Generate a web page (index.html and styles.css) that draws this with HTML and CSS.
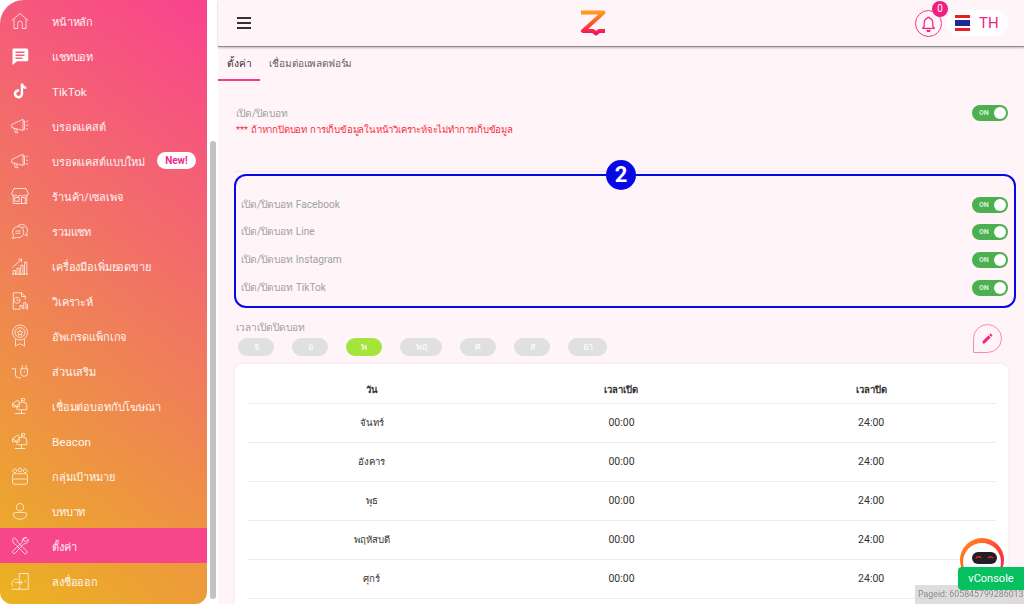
FILE: index.html
```html
<!DOCTYPE html>
<html lang="th">
<head>
<meta charset="utf-8">
<title>ตั้งค่า</title>
<link rel="stylesheet" href="styles.css">
</head>
<body>
<aside class="rail">
  <nav class="side">
    <a class="item"><svg class="ico" viewBox="0 0 24 24"><path d="M1 11.500 12 2l11 9.500M4 9.500V22h5v-7a3 3 0 0 1 6 0v7h5V9.500"/></svg><span>หน้าหลัก</span></a>
    <a class="item"><svg class="ico solid" viewBox="0 0 24 24"><path d="M3 2h18a2 2 0 0 1 2 2v13a2 2 0 0 1-2 2H8l-6 5V4a2 2 0 0 1 1-2zm3 4v2h12V6zm0 4v2h12v-2zm0 4v2h9v-2z" fill-rule="evenodd"/></svg><span>แชทบอท</span></a>
    <a class="item"><svg class="ico solid" viewBox="0 0 24 24"><path d="M13 2h3.200c.3 2.400 1.700 3.900 4.100 4.100v3.300c-1.500 0-2.900-.5-4.100-1.300v7.400c0 4-3 6.500-6.300 6.500-3.500 0-6.200-2.800-6.200-6.200 0-3.700 3.200-6.600 7.100-6.100v3.400c-2-.5-3.700.9-3.700 2.700 0 1.500 1.300 2.800 2.800 2.800 1.700 0 3.100-1.200 3.100-3.200z"/></svg><span class="en">TikTok</span></a>
    <a class="item"><svg class="ico" viewBox="0 0 24 24"><path d="M1 10 16 3v15L1 14zM4 15l2 6h3l-2-5M16 6l2-1v12l-2-1M20 7l3-2M20 11h3M20 15l3 2"/></svg><span>บรอดแคสต์</span></a>
    <a class="item"><svg class="ico" viewBox="0 0 24 24"><path d="M1 10 16 3v15L1 14zM4 15l2 6h3l-2-5M16 6l2-1v12l-2-1M20 7l3-2M20 11h3M20 15l3 2"/></svg><span>บรอดแคสต์แบบใหม่</span><b class="new">New!</b></a>
    <a class="item"><svg class="ico" viewBox="0 0 24 24"><path d="M3 10v12h18V10M1 8l3-6h16l3 6v1a3 3 0 0 1-5.500 1.500 3 3 0 0 1-5.500 0 3 3 0 0 1-5.500 0A3 3 0 0 1 1 9zM5 14h6v5H5zM14 22v-8h5v8"/></svg><span>ร้านค้า/เซลเพจ</span></a>
    <a class="item"><svg class="ico" viewBox="0 0 24 24"><path d="M9 5a8 8 0 0 1 13 6c0 2-.5 3-1.500 4l1.500 3-4-1M9 6a7.500 7.500 0 0 0-7 7.500c0 1.700.6 3 1.500 4.200L2 22l5-1.500a8 8 0 0 0 2.500.5 7.500 7.500 0 0 0 0-15zM6 12h7M6 15h7M15 7h3"/></svg><span>รวมแชท</span></a>
    <a class="item"><svg class="ico" viewBox="0 0 24 24"><path d="M1 23h22M3 23v-5h3v5M8 23v-8h3v8M13 23V11h3v12M18 23V7h3v16M2 14 14 3M10 3h4v4"/></svg><span>เครื่องมือเพิ่มยอดขาย</span></a>
    <a class="item"><svg class="ico" viewBox="0 0 24 24"><path d="M12 23H3V1h11l5 5v4M14 1v5h5M8 7a4 4 0 1 0 .01 0M8 9v2h2M12 23v-5h3v5M17 23v-9h3v9M22 23v-7"/></svg><span>วิเคราะห์</span></a>
    <a class="item"><svg class="ico tall" viewBox="0 0 24 30"><path d="M12 1a10 10 0 1 0 .01 0M12 4.500a6.500 6.500 0 1 0 .01 0M12 7.500l1.200 2.400 2.600.4-1.900 1.800.5 2.600-2.400-1.200-2.400 1.200.5-2.600-1.900-1.800 2.600-.4zM6 20v9l6-3 6 3v-9"/></svg><span>อัพเกรดแพ็กเกจ</span></a>
    <a class="item"><svg class="ico" viewBox="0 0 24 24"><path d="M1 9h5v8a4 4 0 0 0 4 4h3M13 9h9v6a4 4 0 0 1-4 4h-1a4 4 0 0 1-4-4zM15 9V4M20 9V4M17 13h2"/></svg><span>ส่วนเสริม</span></a>
    <a class="item"><svg class="ico" viewBox="0 0 24 24"><path d="M2 9l7-5 2 3v6H2zM2 9l5 3 4-3M14 2v4M14 2h4v3h-4M11 7h6a4 4 0 0 1 4 4v6H9M14 17v5M5 22h14M8 13v4"/></svg><span>เชื่อมต่อบอทกับโฆษณา</span></a>
    <a class="item"><svg class="ico" viewBox="0 0 24 24"><path d="M2 9l7-5 2 3v6H2zM2 9l5 3 4-3M14 2v4M14 2h4v3h-4M11 7h6a4 4 0 0 1 4 4v6H9M14 17v5M5 22h14M8 13v4"/></svg><span class="en">Beacon</span></a>
    <a class="item"><svg class="ico" viewBox="0 0 24 24"><path d="M5 2.500a2.500 2.500 0 1 0 .01 0M12 1.500a2.500 2.500 0 1 0 .01 0M19 2.500a2.500 2.500 0 1 0 .01 0M2 12c0-2 1-3 3-3h14c2 0 3 1 3 3v2c0 1-1 2-2 2H4c-1 0-2-1-2-2zM2 16v4c0 2 1 3 3 3h14c2 0 3-1 3-3v-4"/></svg><span>กลุ่มเป้าหมาย</span></a>
    <a class="item"><svg class="ico" viewBox="0 0 24 24"><path d="M12 2a5 5 0 1 0 .01 0M5 14h14c1 0 2 1 2 2 0 4-4 7-9 7s-9-3-9-7c0-1 1-2 2-2z"/></svg><span>บทบาท</span></a>
    <a class="item active"><svg class="ico" viewBox="0 0 24 24"><path d="M2 3 4 1l4 3 1 3 13 13-3 3L6 10 3 8zM21 1a5 5 0 0 0-6 6L2 19a2.500 2.500 0 0 0 3 3L17 9a5 5 0 0 0 6-6l-3 3-3-1-1-3z"/></svg><span>ตั้งค่า</span></a>
    <a class="item"><svg class="ico" viewBox="0 0 24 24"><path d="M11 17V2h12v21H1M11 23v-4M3 19a4 4 0 0 1 0-7c1-3 5-3 6-1M5 14h10M12 11l3 3-3 3M19 11v3"/></svg><span>ลงชื่อออก</span></a>
  </nav>
  <div class="track"><div class="thumb"></div></div>
</aside>

<main class="main">
  <header class="top">
    <div class="burger"><i></i><i></i><i></i></div>
    <svg class="logo" viewBox="0 0 26 26">
      <defs><linearGradient id="z" x1="0" y1="0" x2="0" y2="1"><stop offset="0" stop-color="#ff9a1e"/><stop offset=".55" stop-color="#ff4a2e"/><stop offset="1" stop-color="#f5145e"/></linearGradient></defs>
      <path d="M1 2.500h22.500L3 21h10l3 2.500 3-2.500h6" fill="none" stroke="url(#z)" stroke-width="4" stroke-linejoin="round"/>
    </svg>
    <div class="tools">
      <div class="bell">
        <svg viewBox="0 0 24 24"><path d="M12 3a1.500 1.500 0 0 1 1.500 1.500c3 1 4.500 3.500 4.500 6.500v5l2 2v1H4v-1l2-2v-5c0-3 1.500-5.500 4.500-6.500A1.500 1.500 0 0 1 12 3zM10 21.500h4a2 2 0 0 1-4 0z"/></svg>
        <b class="count">0</b>
      </div>
      <div class="lang"><span class="flag"></span><span class="code">TH</span></div>
    </div>
  </header>

  <div class="tabs">
    <a class="tab on">ตั้งค่า</a>
    <a class="tab">เชื่อมต่อแพลตฟอร์ม</a>
  </div>

  <div class="body">
    <div class="master">
      <div class="intro">
        <div class="lbl">เปิด/ปิดบอท</div>
        <div class="warn">*** ถ้าหากปิดบอท การเก็บข้อมูลในหน้าวิเคราะห์จะไม่ทำการเก็บข้อมูล</div>
      </div>
      <div class="sw"><em>ON</em><i></i></div>
    </div>
    <hr class="rule">
    <section class="box">
      <b class="mark">2</b>
      <div class="row"><span class="lbl">เปิด/ปิดบอท Facebook</span><div class="sw"><em>ON</em><i></i></div></div>
      <div class="row"><span class="lbl">เปิด/ปิดบอท Line</span><div class="sw"><em>ON</em><i></i></div></div>
      <div class="row"><span class="lbl">เปิด/ปิดบอท Instagram</span><div class="sw"><em>ON</em><i></i></div></div>
      <div class="row"><span class="lbl">เปิด/ปิดบอท TikTok</span><div class="sw"><em>ON</em><i></i></div></div>
    </section>
    <div class="sched">
      <div>
        <div class="lbl">เวลาเปิดปิดบอท</div>
        <div class="days">
          <span class="day w1">จ</span><span class="day w1">อ</span><span class="day w1 lime">พ</span><span class="day w2">พฤ</span><span class="day w1">ศ</span><span class="day w1">ส</span><span class="day w3">อา</span>
        </div>
      </div>
      <button class="edit"><svg viewBox="0 0 24 24"><path d="M3 17.250V21h3.750L17.810 9.940l-3.750-3.750zM20.710 7.040a1 1 0 0 0 0-1.410l-2.340-2.340a1 1 0 0 0-1.410 0l-1.830 1.830 3.750 3.750z"/></svg></button>
    </div>
    <div class="card">
      <table class="tbl">
        <thead><tr><th>วัน</th><th>เวลาเปิด</th><th>เวลาปิด</th></tr></thead>
        <tbody>
          <tr><td>จันทร์</td><td>00:00</td><td>24:00</td></tr>
          <tr><td>อังคาร</td><td>00:00</td><td>24:00</td></tr>
          <tr><td>พุธ</td><td>00:00</td><td>24:00</td></tr>
          <tr><td>พฤหัสบดี</td><td>00:00</td><td>24:00</td></tr>
          <tr><td>ศุกร์</td><td>00:00</td><td>24:00</td></tr>
        </tbody>
      </table>
    </div>
  </div>
</main>

<div class="bot">
  <svg viewBox="0 0 44 44">
    <defs><linearGradient id="r" x1="0" y1="0" x2="1" y2="1"><stop offset="0" stop-color="#ff9a1e"/><stop offset=".5" stop-color="#ff4a2e"/><stop offset="1" stop-color="#f0146e"/></linearGradient></defs>
    <circle cx="22" cy="22" r="22" fill="url(#r)"/>
    <circle cx="22" cy="24" r="19" fill="#fff"/>
    <rect x="12" y="14" width="25" height="12" rx="6" fill="#231f24"/>
    <path d="M16 20q2.500-2.500 5 0M28 20q2.500-2.500 5 0" stroke="#e8243c" stroke-width="1.500" fill="none"/>
  </svg>
</div>
<div class="pageid">Pageid: 605845799286013</div>
<div class="vcon">vConsole</div>
</body>
</html>
```
FILE: styles.css
```css
* { box-sizing: border-box; }
html, body { height: 100%; }
body {
  margin: 0;
  height: 604px;
  overflow: hidden;
  display: flex;
  background: #fff;
  font-family: Roboto, "Noto Sans", "Liberation Sans", sans-serif;
  color: #333;
}
.rail { width: 218px; flex: none; display: flex; background: #fff; }
.side {
  width: 207px;
  height: 604px;
  padding-top: 3px;
  border-radius: 24px 0 12px 12px;
  background: linear-gradient(217deg, #f9428f 0%, #f07c5c 50%, #ebb320 100%);
  overflow: hidden;
}
.item {
  display: flex;
  align-items: center;
  height: 35px;
  padding-left: 11px;
  color: #fff;
  font-size: 11px;
  letter-spacing: -.15px;
  white-space: nowrap;
}
.item span { margin-left: 23px; padding-top: 2px; opacity: .92; }
.item .en { font-size: 11.700px; letter-spacing: 0; }
.item.active { background: #f7468a; }
.ico {
  width: 18px;
  height: 18px;
  flex: none;
  fill: none;
  stroke: rgba(255,255,255,.8);
  stroke-width: 1.200;
}
.ico.tall { height: 23px; }
.ico.solid { fill: #fff; stroke: none; }
.new {
  margin-left: 12px;
  width: 39px;
  height: 17px;
  line-height: 17px;
  border-radius: 9px;
  background: #fff;
  color: #ee2a8e;
  font-size: 10px;
  letter-spacing: 0;
  text-align: center;
}
.track { width: 11px; padding: 141px 2px 4px 3px; }
.thumb { width: 6px; height: 458px; border-radius: 3px; background: #c2c2c2; }

.main { flex: 1; min-width: 0; background: #fff5f9; display: flex; flex-direction: column; }
.top {
  height: 47px;
  flex: none;
  display: flex;
  align-items: center;
  padding: 0 16px 0 19px;
  border-bottom: 1px solid #8f8b8d;
  box-shadow: 0 1px 2px rgba(0,0,0,.25);
  position: relative;
}
.burger { width: 14px; display: flex; flex-direction: column; gap: 3px; }
.burger i { height: 2px; background: #333; }
.logo { width: 26px; height: 26px; margin-left: 329px; }
.tools { margin-left: auto; display: flex; align-items: center; gap: 4px; }
.bell {
  position: relative;
  width: 27px;
  height: 27px;
  border: 1px solid #f0378c;
  border-radius: 50%;
  display: flex;
  align-items: center;
  justify-content: center;
}
.bell svg { width: 17px; height: 17px; fill: none; stroke: #ee2484; stroke-width: 1.700; }
.count {
  position: absolute;
  right: -7px;
  top: -10px;
  width: 16px;
  height: 16px;
  border-radius: 50%;
  background: #ee1f7d;
  color: #fff;
  font-size: 10px;
  font-weight: 400;
  line-height: 16px;
  text-align: center;
}
.lang {
  width: 62px;
  height: 26px;
  border-radius: 13px;
  background: #fff;
  display: flex;
  align-items: center;
  padding-left: 9px;
}
.flag {
  width: 15px;
  height: 16px;
  background: linear-gradient(#ed1c24 0 17%, #fff 17% 33%, #1d2a8f 33% 67%, #fff 67% 83%, #ed1c24 83%);
}
.code { margin-left: 9px; color: #ee2484; font-size: 15px; }

.tabs { display: flex; height: 34px; flex: none; }
.tab { padding: 0 9px; line-height: 34px; font-size: 10px; letter-spacing: -.15px; color: #666; height: 34px; }
.tab.on { color: #333; border-bottom: 2px solid #f7378c; font-size: 10.200px; }

.body { padding: 0 16px 0 17px; position: relative; }
.lbl { font-size: 10.200px; line-height: 16px; color: #a0a0a0; }
.master {
  display: flex;
  justify-content: space-between;
  align-items: flex-start;
  padding: 24px 0 0 1px;
  height: 90px;
}
.intro { padding-top: 1px; }
.warn { font-size: 9.600px; line-height: 16px; letter-spacing: -.2px; word-spacing: 1px; color: #f72a3c; }
.rule { margin: 0 0 2px 0; border: 0; height: 1px; background: #f0e9ee; }
.box {
  position: relative;
  margin-left: -1px;
  margin-right: -8px;
  height: 134px;
  border: 2px solid #0808e6;
  border-radius: 12px;
  padding: 15px 6px 0 5px;
}
.row { height: 27.600px; display: flex; align-items: center; justify-content: space-between; }
.mark {
  position: absolute;
  left: 370px;
  top: -16px;
  width: 30px;
  height: 30px;
  border-radius: 50%;
  background: #0808e6;
  color: #fff;
  font-size: 22px;
  line-height: 30px;
  text-align: center;
}
.sw {
  position: relative;
  width: 36px;
  height: 16px;
  border-radius: 8px;
  background: #4caf50;
  flex: none;
}
.sw em { position: absolute; left: 7px; top: 0; font-style: normal; font-size: 7px; font-weight: 700; line-height: 16px; color: #d9efda; }
.sw i { position: absolute; right: 2px; top: 2px; width: 12px; height: 12px; border-radius: 50%; background: #fff; }
.sched { display: flex; justify-content: space-between; padding: 12px 6px 0 1px; height: 56px; }
.days { display: flex; gap: 18px; margin-top: 2px; padding-left: 2px; }
.day {
  height: 18px;
  border-radius: 9px;
  background: #e0e0e0;
  color: #fff;
  font-size: 9px;
  line-height: 18px;
  text-align: center;
}
.w1 { width: 36px; }
.w2 { width: 42px; }
.w3 { width: 39px; }
.lime { background: #a4e53c; }
.edit {
  width: 29px;
  height: 29px;
  margin-top: 4px;
  padding: 0;
  border: 1px solid #f78ab6;
  border-radius: 50% 50% 50% 0;
  background: transparent;
  display: flex;
  align-items: center;
  justify-content: center;
}
.edit svg { width: 13px; height: 13px; fill: #f0257f; }
.card {
  background: #fff;
  border-radius: 8px;
  padding: 6px 12px 0;
  box-shadow: 0 0 4px rgba(0,0,0,.06);
  height: 260px;
}
.tbl { width: 100%; border-collapse: collapse; table-layout: fixed; }
.tbl th, .tbl td { height: 39px; text-align: center; font-size: 10.500px; color: #333; border-bottom: 1px solid #eceaeb; padding: 0; }
.tbl td:first-child { font-size: 9.600px; }
.tbl th { height: 33px; padding-top: 6px; font-size: 9.500px; font-weight: 700; }

.bot { position: fixed; left: 960px; top: 538px; width: 44px; height: 44px; }
.bot svg { display: block; width: 44px; height: 44px; }
.pageid {
  position: fixed;
  left: 915px;
  top: 585px;
  width: 109px;
  height: 19px;
  background: rgba(200,200,200,.6);
  color: #8a8a8a;
  font-size: 8.800px;
  line-height: 19px;
  padding-left: 3px;
  white-space: nowrap;
}
.vcon {
  position: fixed;
  left: 958px;
  top: 567px;
  width: 66px;
  height: 23px;
  border-radius: 4px 0 0 4px;
  background: #07c160;
  color: #fff;
  font-size: 11px;
  line-height: 23px;
  text-align: center;
}
```
